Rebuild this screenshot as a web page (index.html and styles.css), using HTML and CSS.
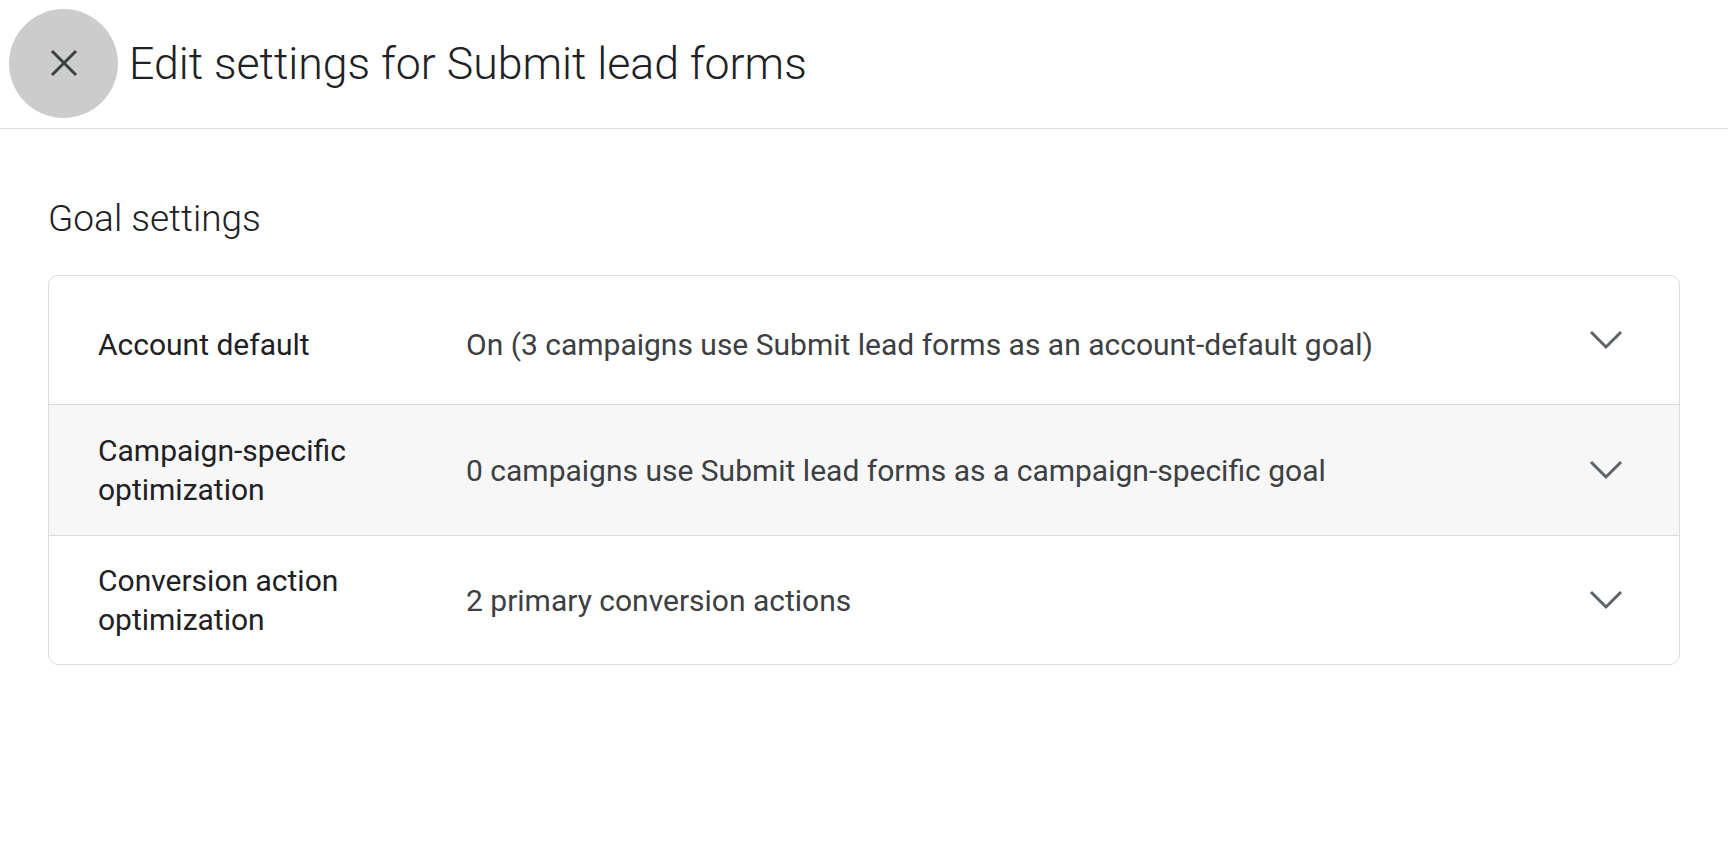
FILE: index.html
```html
<!DOCTYPE html>
<html lang="en">
<head>
<meta charset="utf-8">
<title>Edit settings for Submit lead forms</title>
<link rel="stylesheet" href="styles.css">
</head>
<body>
<header class="top-bar">
  <button class="close-btn" aria-label="Close">
    <svg width="28" height="28" viewBox="0 0 28 28"><path d="M2 2 L26 26 M26 2 L2 26" stroke="#3c4043" stroke-width="3" fill="none"/></svg>
  </button>
  <h1 class="title">Edit settings for Submit lead forms</h1>
</header>
<main class="content">
  <h2 class="section-title">Goal settings</h2>
  <div class="card">
    <div class="row row-first">
      <div class="label">Account default</div>
      <div class="value">On (3 campaigns use Submit lead forms as an account-default goal)</div>
      <svg class="chevron" width="34" height="20" viewBox="0 0 34 20"><path d="M2 2 L17 17 L32 2" stroke="#5f6368" stroke-width="3" fill="none"/></svg>
    </div>
    <div class="row row-alt">
      <div class="label">Campaign-specific<br>optimization</div>
      <div class="value">0 campaigns use Submit lead forms as a campaign-specific goal</div>
      <svg class="chevron" width="34" height="20" viewBox="0 0 34 20"><path d="M2 2 L17 17 L32 2" stroke="#5f6368" stroke-width="3" fill="none"/></svg>
    </div>
    <div class="row">
      <div class="label">Conversion action<br>optimization</div>
      <div class="value">2 primary conversion actions</div>
      <svg class="chevron" width="34" height="20" viewBox="0 0 34 20"><path d="M2 2 L17 17 L32 2" stroke="#5f6368" stroke-width="3" fill="none"/></svg>
    </div>
  </div>
</main>
</body>
</html>
```

FILE: styles.css
```css
* { box-sizing: border-box; }
html, body { margin: 0; padding: 0; background: #fff; }
body { font-family: Roboto, "Noto Sans", sans-serif; color: #202124; }

.top-bar {
  height: 129px;
  display: flex;
  align-items: center;
  gap: 12px;
  padding-left: 9px;
  border-bottom: 1px solid #dadce0;
}
.close-btn {
  width: 109px;
  height: 109px;
  border-radius: 50%;
  border: none;
  background: #cccccc;
  display: flex;
  align-items: center;
  justify-content: center;
  padding: 0;
  margin-top: -2px;
}
.title {
  margin: 0 0 0 -1px;
  font-weight: 300;
  font-size: 44.6px;
  color: #202124;
}

.content { padding: 0 48px; }
.section-title {
  margin: 71px 0 37px;
  font-weight: 300;
  font-size: 37px;
  line-height: 38px;
  color: #202124;
}
.card {
  border: 1px solid #dadce0;
  border-radius: 10px;
  overflow: hidden;
}
.row {
  height: 129px;
  display: flex;
  align-items: center;
  padding: 0 56px 0 49px;
}
.row-first { height: 128px; }
.row + .row { border-top: 1px solid #dadce0; }
.row-alt { background: #f7f7f7; height: 131px; }
.row-first .label,
.row-first .value { padding-top: 8px; }
.label {
  width: 368px;
  flex: none;
  font-size: 30px;
  line-height: 39px;
  color: #202124;
}
.value {
  flex: 1;
  font-size: 30px;
  line-height: 39px;
  color: #3c4043;
}
.chevron { flex: none; }
```
